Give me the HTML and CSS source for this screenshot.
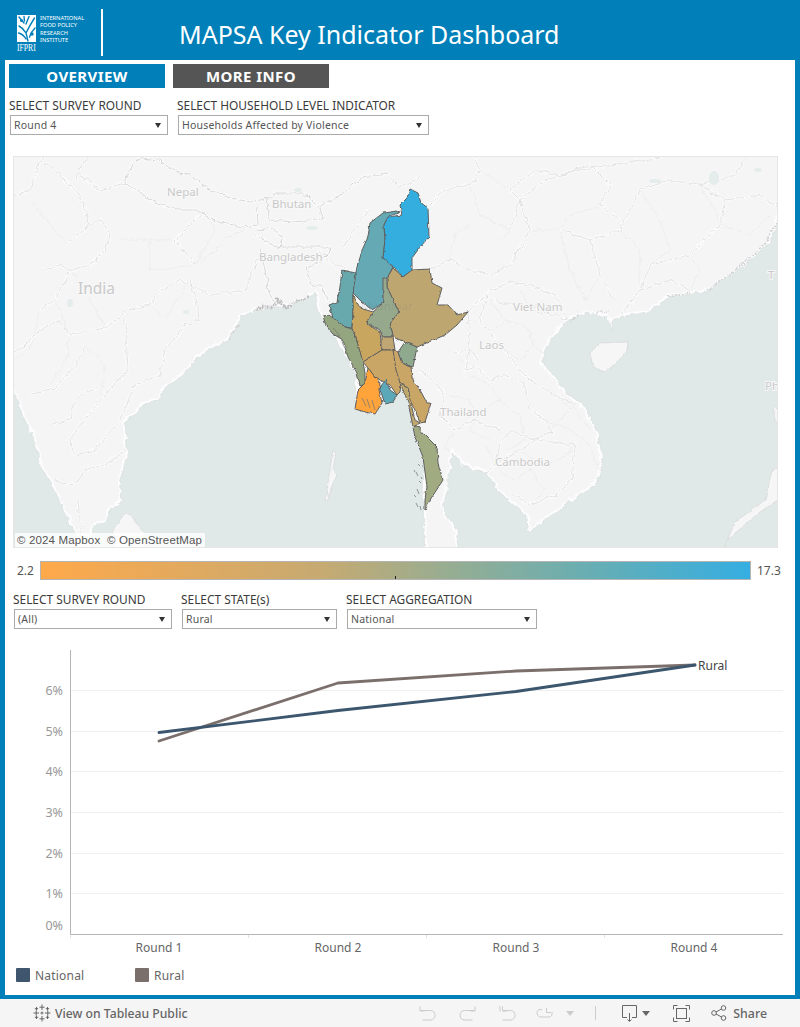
FILE: index.html
```html
<!DOCTYPE html>
<html lang="en">
<head>
<meta charset="utf-8">
<title>MAPSA Key Indicator Dashboard</title>
<link rel="stylesheet" href="styles.css">
</head>
<body>
<div class="frame">
  <header class="header">
    <div class="logo">
      <div class="logo-mark">
        <svg class="logo-svg" viewBox="0 0 20 37" width="20" height="37">
          <rect x="0" y="0" width="19" height="27" fill="#fff"/>
          <g fill="none" stroke="#007fb9" stroke-width="1.4" stroke-linecap="round">
            <path d="M2 2 L7 8 M7 1.5 L7.5 6 M12 1.5 L9 9 M17.5 3 Q13 10 9 18 M2 11 Q6 13 9 18 L11 26 M1.5 18 Q6 19 9 24 M18 13 Q14 17 12.5 22"/>
          </g>
          <circle cx="4.5" cy="5.5" r="1.5" fill="#007fb9"/>
          <circle cx="15" cy="19" r="1.7" fill="#007fb9"/>
          <text x="0" y="25.7" class="logo-ifpri" transform="scale(1 1.4)">IFPRI</text>
        </svg>
      </div>
      <div class="logo-text">INTERNATIONAL<br>FOOD POLICY<br>RESEARCH<br>INSTITUTE</div>
    </div>
    <div class="header-rule"></div>
    <h1 class="title">MAPSA Key Indicator Dashboard</h1>
  </header>

  <main class="sheet">
    <nav class="tabs">
      <div class="tab tab-active">OVERVIEW</div>
      <div class="tab tab-muted">MORE INFO</div>
    </nav>

    <section class="filters filters-top">
      <div class="filter filter-a">
        <div class="filter-label">SELECT SURVEY ROUND</div>
        <div class="select"><span>Round 4</span><i class="caret"></i></div>
      </div>
      <div class="filter filter-b">
        <div class="filter-label">SELECT HOUSEHOLD LEVEL INDICATOR</div>
        <div class="select"><span>Households Affected by Violence</span><i class="caret"></i></div>
      </div>
    </section>

    <div class="map-wrap">
      <svg class="map" viewBox="13 156 765 392" width="765" height="392">
        <defs>
          <filter id="rough" x="0" y="140" width="800" height="430" filterUnits="userSpaceOnUse" color-interpolation-filters="sRGB">
            <feTurbulence type="fractalNoise" baseFrequency="0.14" numOctaves="3" seed="7" result="n"/>
            <feDisplacementMap in="SourceGraphic" in2="n" scale="6" xChannelSelector="R" yChannelSelector="G" result="d"/>
            <feGaussianBlur in="d" stdDeviation="0.35"/>
          </filter>
          <filter id="rough-soft" x="0" y="140" width="800" height="430" filterUnits="userSpaceOnUse" color-interpolation-filters="sRGB">
            <feTurbulence type="fractalNoise" baseFrequency="0.2" numOctaves="2" seed="3" result="n"/>
            <feDisplacementMap in="SourceGraphic" in2="n" scale="3" xChannelSelector="R" yChannelSelector="G" result="d"/>
            <feGaussianBlur in="d" stdDeviation="0.3"/>
          </filter>
          <g id="seas">
            <path d="M0 375 L13 390 L23 417 L33 437 L40 463 L53 487 L65 513 L75 533 L78 560 L0 560Z"/>
            <path d="M90 560 L93 527 L107 520 L110 510 L122 503 L120 477 L128 457 L127 447 L125 422 L137 413 L143 405 L160 400 L163 390 L180 377 L193 363 L210 348 L227 342 L237 327 L240 317 L257 310 L277 307 L290 307 L307 297 L315 293 L320 317 L328 325 L340 345 L355 375 L356 409 L375 414 L382 403 L397 395 L402 383 L410 400 L414 430 L424 465 L423 500 L425 560Z"/>
            <path d="M790 200 L778 218 L770 243 L747 263 L723 280 L707 292 L670 297 L647 312 L620 317 L612 320 L612 333 L607 317 L587 313 L570 320 L558 330 L545 350 L543 363 L557 380 L567 393 L585 407 L598 433 L603 463 L597 483 L573 500 L557 512 L528 532 L527 517 L517 507 L497 490 L487 473 L463 465 L453 453 L447 490 L443 507 L448 517 L457 530 L458 560 L790 560Z"/>
          </g>
          <g id="minor">
            <path d="M470 375 L490 385 L500 400 L480 410 L470 430 L490 440 M445 395 L470 400 L478 420 M500 400 L520 415 L525 440 L505 450 M455 430 L445 445 L452 455 M485 445 L500 470 L515 480 L530 470 L545 490 L530 505 M520 450 L540 465 L560 460 L575 445 M545 420 L570 430 L590 445 L598 470 M555 395 L575 410 L590 430 M540 437 L560 420 L575 405 M490 300 L505 320 L525 325 L535 345 L520 360 M505 320 L490 335 L505 350 L520 360 M460 360 L478 367 M520 290 L530 310 L545 300 M535 345 L550 360"/>
            <path d="M690 255 L700 270 L690 290 M620 230 L640 250 L640 290 M560 230 L570 270 L585 300 L600 275 M650 265 L670 250 L660 220 L640 190 M720 225 L750 235 L770 215 M700 185 L715 210 L720 225 M530 230 L560 230 M480 170 L510 190 M600 205 L570 215 L560 230 M500 240 L510 230 M470 185 L480 215 L510 230 M450 260 L455 235 L470 225"/>
            <path d="M30 200 L55 230 L67 243 M150 240 L175 240 M120 240 L150 240 L150 270 L195 265 M40 310 L30 350 L15 360 M195 265 L210 255 L230 235 L245 230 M205 210 L215 230 L195 265 M70 335 L65 360 L50 385 M55 300 L70 335 M85 345 L105 365 L100 400 M150 305 L165 320 L190 280 M105 328 L90 300 L70 270"/>
          </g>
          <path id="major" d="M125 183 L132 163 L143 158 L158 160 L173 170 L190 175 L207 188 L230 198 L250 202 L268 198 L277 193 L303 193 L320 207 L322 218 L295 222 L270 220 L267 210 L268 198 M125 183 L150 200 L177 210 L197 210 L217 222 L243 227 L258 225 L257 207 M320 207 L343 193 L363 177 L387 173 L398 187 M257 230 L273 228 L283 240 L281 248 L257 238 L252 232 M277 247 L327 247 L332 250 L320 262 L307 267 L312 287 L320 283 L328 300 M260 250 L265 270 L268 290 L277 307"/>
          <path id="mid" d="M353 273 L330 262 L320 250 M343 247 L365 215 L373 205 M398 187 L415 180 L420 175 M430 205 L445 190 L470 185 L480 170 L470 150 M430 269 L450 260 L470 270 L490 275 L510 265 L530 230 L520 200 L545 180 L580 170 L610 165 L650 160 L680 150 M468 312 L490 290 L510 282 L530 285 L555 295 L562 310 L567 320 L555 315 L530 310 L490 300 M488 295 L480 320 L500 345 L520 370 L530 380 L555 395 L575 405 M468 312 L470 340 L465 370 L478 367 L490 380 L505 375 L525 385 L530 410 L545 420 L552 432 L540 437 L520 450 L495 465 L488 473 M495 465 L500 445 L510 430 L520 435 L537 440 L575 445 L572 480 L555 495 L530 505 L514 495 M455 352 L470 350 L478 360 M420 370 L432 380 L445 395 L440 415 L455 430 L475 420 L500 430 M620 317 L640 290 L650 265 L690 255 L720 225 L725 200 L700 185 L670 180 L640 190 L620 230 L590 240 L560 230 M700 185 L735 175 L750 150 M725 200 L760 195 L785 210 M640 290 L670 280 L690 290 M590 240 L600 275 L615 300 M510 230 L520 200 L510 190 L535 170 L560 175 L590 165 L610 185 L600 205 L620 220 M5 360 L25 345 L40 330 L60 320 L70 335 L105 328 L128 310 L150 305 L160 290 L180 280 L210 295 L245 290 L258 258 M67 243 L90 225 L100 220 L110 235 L105 250 L90 265 L70 270 L55 300 L40 310 M40 270 L60 265 L70 270 M195 265 L175 240 L190 225 L205 210 M90 225 L80 195 L60 175 L40 160 M190 280 L200 320 L185 325 L165 350 L160 375 L135 385 L120 420 M125 320 L128 370 L100 400 L80 425 L70 440 L75 455 L95 450 L120 420 M30 395 L55 388 L80 360 L85 345 M50 425 L70 420 L75 400 L100 385 M85 470 L105 465 L125 450 M85 470 L80 480 L70 485 L55 480 M78 500 L82 540 M80 175 L100 190 L125 183 M5 200 L30 190 L40 160 L55 150 M90 150 L75 180"/>
        </defs>
        <rect x="13" y="156" width="765" height="392" fill="#f5f5f5"/>
        <g filter="url(#rough)">
          <use href="#seas" class="coast-glow"/>
          <use href="#minor" class="line-minor"/>
          <use href="#mid" class="line-glow"/>
          <use href="#major" class="line-glow"/>
          <use href="#mid" class="line-mid"/>
          <use href="#major" class="line-major"/>
          <use href="#seas" class="sea-fill"/>
          <path class="coast-dark" d="M257 310 L262 306 L272 307 L278 300 L285 308 L295 303 L308 296"/>
          <path class="coast-light" d="M570 322 L580 314 M668 297 L690 293 M707 291 L740 266 L765 245 L776 222 M596 313 L610 311 M237 327 L227 342"/>
        </g>
        <g class="land-edge" filter="url(#rough-soft)">
          <path d="M590 353 L600 343 L628 342 L627 350 L617 363 L605 372 L593 367Z"/>
          <path d="M125 513 L131 515 L143 532 L146 555 L112 555 L114 528Z"/>
          <path d="M773 405 L777 408 L782 430 L775 420Z"/>
          <path d="M772 470 L782 465 L782 498 L760 512 L727 540 L725 555 L721 555 L735 522 L765 500Z"/>
          <path d="M333 450 L336 452 L333 470 L337 475 L331 488 L329 498 L327 490 L330 470Z"/>
          <path d="M326 495 L329 497 L328 501 L325 500Z"/>
        </g>
        <g class="lakes">
          <ellipse cx="714" cy="178" rx="5" ry="7"/>
          <ellipse cx="758" cy="170" rx="4" ry="2"/>
          <ellipse cx="655" cy="181" rx="6" ry="2"/>
          <ellipse cx="70" cy="303" rx="3" ry="4"/>
          <ellipse cx="186" cy="312" rx="3" ry="2"/>
          <ellipse cx="298" cy="190" rx="4" ry="2"/>
          <ellipse cx="312" cy="228" rx="6" ry="2"/>
        </g>
        <g class="map-labels">
          <text x="167" y="196" class="lb12">Nepal</text>
          <text x="272" y="208" class="lb12">Bhutan</text>
          <text x="259" y="261" class="lb12">Bangladesh</text>
          <text x="78" y="294" class="lb16">India</text>
          <text x="513" y="311" class="lb12">Viet Nam</text>
          <text x="479" y="349" class="lb12">Laos</text>
          <text x="440" y="416" class="lb12">Thailand</text>
          <text x="495" y="466" class="lb12">Cambodia</text>
          <text x="768" y="279" class="lb12">T</text>
          <text x="765" y="390" class="lb12">Ph</text>
        </g>
        <g class="regions" filter="url(#rough-soft)">
          <path fill="#64a9b3" d="M400 212 L388 217 L384 225 L385 240 L383 258 L393 267 L387 278 L383 290 L383 303 L372 310 L362 302 L353 293 L353 287 L357 267 L363 248 L368 237 L370 223 L383 213 L397 211Z"/>
          <path fill="#68a9ae" d="M342 270 L356 273 L353 293 L353 312 L352 328 L345 327 L333 318 L329 305 L337 302 L340 287Z"/>
          <path fill="#33aede" d="M410 189 L418 193 L421 203 L428 208 L429 237 L420 247 L412 258 L412 270 L403 277 L395 268 L388 262 L383 258 L385 240 L384 225 L388 217 L402 215 L400 205 L407 198Z"/>
          <path fill="#93a67f" d="M323 316 L329 315 L333 318 L345 327 L352 329 L356 338 L362 357 L365 373 L365 384 L360 386 L357 373 L348 357 L343 340 L333 334 L326 326Z"/>
          <path fill="#c9a660" d="M353 295 L360 308 L373 312 L366 323 L380 332 L382 350 L363 362 L356 338 L352 328 L353 312Z"/>
          <path fill="#bea671" d="M393 268 L403 277 L412 270 L430 269 L432 283 L442 288 L437 305 L448 305 L457 315 L468 312 L457 325 L445 335 L417 347 L393 337 L390 323 L399 312 L387 287 L387 278Z"/>
          <path fill="#97a98c" d="M383 278 L387 278 L387 287 L399 312 L390 323 L393 337 L382 337 L380 330 L366 323 L373 312 L383 303Z"/>
          <path fill="#bfa672" d="M382 337 L393 337 L395 350 L382 350Z"/>
          <path fill="#c9a566" d="M382 350 L395 350 L398 365 L402 375 L400 392 L397 395 L390 385 L380 380 L375 377 L368 368 L363 362Z"/>
          <path fill="#c9a566" d="M393 350 L398 352 L402 363 L411 367 L412 378 L420 390 L427 403 L431 403 L425 422 L420 423 L415 410 L410 400 L408 387 L400 383 L396 370Z"/>
          <path fill="#8fa98f" d="M405 342 L417 347 L413 367 L402 363 L398 352Z"/>
          <path fill="#ffa33b" d="M368 368 L375 377 L380 383 L379 390 L382 403 L375 414 L365 412 L355 409 L358 390 L365 383Z"/>
          <path fill="#5ba9b8" d="M386 380 L390 390 L397 395 L393 402 L385 404 L382 395 L379 388Z"/>
          <path fill="#bfa76e" d="M400 383 L408 387 L410 400 L415 420 L420 423 L413 427 L408 402Z"/>
          <path fill="#a0ab82" d="M417 426 L425 435 L437 447 L438 463 L443 480 L430 500 L425 510 L425 500 L427 487 L423 457 L415 437 L413 427Z"/>
        </g>
        <text x="361" y="310" class="lb-myanmar">Myanmar</text>
        <g class="isles">
          <path d="M418 464 L420 466 M416 472 L418 476 M419 481 L421 483 M417 489 L419 494 M421 477 L422 479 M414 495 L416 497 M416 503 L418 507 M420 506 L421 510 M414 470 L415 472"/>
          <path d="M362 398 L366 406 M367 399 L370 408 M372 400 L375 410"/>
          <path d="M333 328 L340 336 M342 342 L346 350 M337 335 L343 340"/>
        </g>
      </svg>
      <div class="attribution">© 2024 Mapbox&nbsp; © OpenStreetMap</div>
    </div>

    <section class="scale">
      <span class="scale-min">2.2</span>
      <div class="scale-bar"><i class="scale-tick"></i></div>
      <span class="scale-max">17.3</span>
    </section>

    <section class="filters filters-low">
      <div class="filter filter-c">
        <div class="filter-label">SELECT SURVEY ROUND</div>
        <div class="select"><span>(All)</span><i class="caret"></i></div>
      </div>
      <div class="filter filter-d">
        <div class="filter-label">SELECT STATE(s)</div>
        <div class="select"><span>Rural</span><i class="caret"></i></div>
      </div>
      <div class="filter filter-e">
        <div class="filter-label">SELECT AGGREGATION</div>
        <div class="select"><span>National</span><i class="caret"></i></div>
      </div>
    </section>

    <svg class="chart" viewBox="5 640 790 318" width="790" height="318">
      <g class="grid">
        <path d="M71 690.5H783M71 731.5H783M71 771.5H783M71 812.5H783M71 853.5H783M71 893.5H783"/>
      </g>
      <g class="axis">
        <path d="M70.5 650V934.5H783"/>
      </g>
      <g class="ticks">
        <path d="M70.5 935V938M248.5 935V938M426.5 935V938M604.5 935V938"/>
      </g>
      <g class="y-labels">
        <text x="63" y="695">6%</text>
        <text x="63" y="736">5%</text>
        <text x="63" y="776">4%</text>
        <text x="63" y="817">3%</text>
        <text x="63" y="858">2%</text>
        <text x="63" y="898">1%</text>
        <text x="63" y="930">0%</text>
      </g>
      <polyline class="line-rural" points="159,741 338,683 516,671 695,665"/>
      <polyline class="line-national" points="159,732.5 338,710.5 516,691.5 695,665"/>
      <text x="698" y="670" class="line-label">Rural</text>
      <g class="x-labels">
        <text x="159" y="952">Round 1</text>
        <text x="338" y="952">Round 2</text>
        <text x="516" y="952">Round 3</text>
        <text x="694" y="952">Round 4</text>
      </g>
    </svg>

    <section class="legend">
      <div class="legend-item legend-national"><i class="swatch swatch-national"></i><span>National</span></div>
      <div class="legend-item"><i class="swatch swatch-rural"></i><span>Rural</span></div>
    </section>
  </main>
</div>

<footer class="toolbar">
  <div class="tb-left">
    <svg class="tb-logo" viewBox="0 0 18 18" width="18" height="18">
      <path d="M9 0.5V6M6.5 3.2H11.5M9 12V17.5M6.5 14.8H11.5M0.5 9H6M3.2 6.5V11.5M12 9H17.5M14.8 6.5V11.5M3.5 3V6.5M1.8 4.7H5.2M14.5 3V6.5M12.8 4.7H16.2M3.5 11.5V15M1.8 13.3H5.2M14.5 11.5V15M12.8 13.3H16.2M9 7.5V10.5M7.5 9H10.5"/>
    </svg>
    <span>View on Tableau Public</span>
  </div>
  <div class="tb-right">
    <svg class="tb-icon off i1" viewBox="0 0 17 16" width="17" height="16"><path d="M1 1.5V6H5.5M1.5 5.5H11.5C14.2 5.5 16 7.5 16 10.2S14.2 15 11.5 15H3.5"/></svg>
    <svg class="tb-icon off i2" viewBox="0 0 17 16" width="17" height="16"><path d="M16 1.5V6H11.5M15.5 5.5H5.5C2.8 5.5 1 7.5 1 10.2S2.8 15 5.5 15H13.5"/></svg>
    <svg class="tb-icon off i3" viewBox="0 0 17 16" width="17" height="16"><path d="M1 1V6.5M3.5 1.5V6H8M4 5.5H11.5C14.2 5.5 16 7.5 16 10.2S14.2 15 11.5 15H3.5"/></svg>
    <svg class="tb-icon off i4" viewBox="0 0 17 16" width="17" height="16"><path d="M10.5 3V7.5H15M6 4.5H4C2.3 4.5 1 5.9 1 7.5S2.3 12 4 12H13C14.7 12 16 10.6 16 9V7"/></svg>
    <i class="tb-caret off-caret i5"></i>
    <i class="tb-sep"></i>
    <svg class="tb-icon on i6" viewBox="0 0 15 17" width="15" height="17"><path d="M5 12.5H0.5V0.5H14.5V12.5H10M7.5 8V16M5.5 14.5L7.5 16.5L9.5 14.5"/></svg>
    <i class="tb-caret on-caret i7"></i>
    <svg class="tb-icon on i8" viewBox="0 0 17 17" width="17" height="17"><path d="M0.5 4.5V0.5H4.5M12.5 0.5H16.5V4.5M16.5 12.5V16.5H12.5M4.5 16.5H0.5V12.5"/><rect x="3.5" y="3.5" width="10" height="10"/></svg>
    <svg class="tb-icon on i9" viewBox="0 0 16 16" width="16" height="16"><circle cx="3" cy="8" r="2.3"/><circle cx="12.5" cy="3" r="2.3"/><circle cx="12.5" cy="13" r="2.3"/><path d="M5 7L10.5 4M5 9L10.5 12"/></svg>
    <span class="tb-share">Share</span>
  </div>
</footer>
</body>
</html>
```
FILE: styles.css
```css
* { box-sizing: border-box; }
html, body { margin: 0; padding: 0; }
body {
  width: 800px;
  height: 1027px;
  overflow: hidden;
  background: #f5f5f5;
  font-family: "Noto Sans", "Open Sans", sans-serif;
}
.frame {
  background: #007fb9;
  padding: 0 5px 4px;
  height: 999px;
  display: flex;
  flex-direction: column;
}
.header {
  height: 60px;
  margin: 0 -5px;
  display: flex;
  align-items: flex-start;
  color: #fff;
}
.logo {
  display: flex;
  margin: 15px 0 0 17px;
  width: 84px;
  gap: 3px;
}
.logo-mark { width: 20px; height: 37px; }
.logo-svg { display: block; overflow: visible; }
.logo-ifpri { font: 400 7.7px "Liberation Serif", serif; fill: #fff; }
.logo-text {
  font: 5.7px/7.3px "Noto Sans", sans-serif;
  color: #fff;
  white-space: nowrap;
}
.header-rule {
  width: 2px;
  height: 47px;
  margin-top: 9px;
  background: #fff;
}
.title {
  margin: 16px 0 0 76px;
  font-weight: 400;
  font-size: 25px;
  line-height: 36px;
  color: #fff;
  white-space: nowrap;
}
.sheet {
  background: #fff;
  flex: 1;
  min-height: 0;
  overflow: hidden;
}
.tabs {
  display: flex;
  gap: 8px;
  padding: 4px 0 0 4px;
}
.tab {
  width: 156px;
  height: 24px;
  line-height: 24px;
  text-align: center;
  color: #fff;
  font-size: 15px;
  font-weight: 700;
  letter-spacing: 0.4px;
}
.tab-active { background: #007fb9; }
.tab-muted { background: #555; }
.filters { display: flex; }
.filters-top { margin: 10px 0 0 4px; }
.filters-low { margin: 12px 0 0 8px; }
.filter-label {
  height: 17px;
  line-height: 15px;
  font-size: 11.9px;
  color: #3a3a3a;
  white-space: nowrap;
}
.select {
  height: 20px;
  margin-left: 1px;
  border: 1px solid #aaa;
  display: flex;
  align-items: center;
  justify-content: space-between;
  padding: 0 6px 0 3px;
  font-size: 10.5px;
  color: #555;
  letter-spacing: 0.2px;
  background: #fff;
  white-space: nowrap;
}
.caret {
  width: 0;
  height: 0;
  border-left: 3.5px solid transparent;
  border-right: 3.5px solid transparent;
  border-top: 5px solid #333;
}
.filter-a { width: 159px; margin-right: 9px; }
.filter-b { width: 252px; }
.filter-c { width: 159px; margin-right: 9px; }
.filter-d { width: 156px; margin-right: 9px; }
.filter-e { width: 191px; }
.map-wrap {
  position: relative;
  margin: 21px 0 0 8px;
  width: 765px;
  height: 392px;
}
.map { display: block; outline: 1px solid #e6e6e6; outline-offset: -1px; }
.sea-fill { fill: #e1e8e8; stroke: #d9dddd; stroke-width: 0.7; }
.coast-glow { fill: none; stroke: #fff; stroke-width: 5; opacity: 0.8; }
.line-minor { fill: none; stroke: #e9e9e9; stroke-width: 0.7; }
.line-glow { fill: none; stroke: #fbfbfb; stroke-width: 3; }
.line-mid { fill: none; stroke: #dcdcdc; stroke-width: 0.8; }
.line-major { fill: none; stroke: #d2d2d2; stroke-width: 0.9; }
.coast-dark { fill: none; stroke: #bdbdbd; stroke-width: 2.6; stroke-dasharray: 2 1; }
.coast-light { fill: none; stroke: #cdcdcd; stroke-width: 1.4; stroke-dasharray: 2 1.5; }
.land-edge path { fill: #f6f6f6; stroke: #d6d6d6; stroke-width: 0.7; }
.lakes ellipse { fill: #e5ecec; }
.map-labels text {
  fill: #c9c9c9;
  font-family: "Noto Sans", sans-serif;
  stroke: #f8f8f8;
  stroke-width: 2px;
  paint-order: stroke;
}
.lb12 { font-size: 11.5px; }
.lb16 { font-size: 15.5px; }
.lb-myanmar {
  font-family: "Noto Sans", sans-serif;
  font-size: 11.5px;
  fill: rgba(110, 110, 110, 0.18);
}
.regions path {
  stroke: #5f5f5f;
  stroke-width: 1;
  stroke-linejoin: round;
}
.isles path { fill: none; stroke: #777; stroke-width: 1; opacity: 0.75; }
.attribution {
  position: absolute;
  left: 2px;
  bottom: 1px;
  width: 190px;
  height: 14px;
  padding-left: 2px;
  background: rgba(255, 255, 255, 0.8);
  font: 11.5px/14px "Liberation Sans", sans-serif;
  letter-spacing: 0.15px;
  color: #555;
  white-space: nowrap;
}
.scale {
  margin: 13px 0 0 0;
  height: 19px;
  display: flex;
  align-items: center;
  font-size: 12px;
  color: #555;
}
.scale-min { width: 35px; padding-left: 12px; }
.scale-max { margin-left: 6px; }
.scale-bar {
  position: relative;
  width: 711px;
  height: 19px;
  border: 1px solid #b5b5b5;
  background: linear-gradient(90deg, #ffa94a 0%, #c5aa72 40%, #98ad91 57%, #66aeb4 78%, #35aee2 100%);
}
.scale-tick {
  position: absolute;
  left: 354px;
  bottom: 0;
  width: 1px;
  height: 3px;
  background: #222;
}
.chart { display: block; margin-top: 11px; }
.grid path { stroke: #efefef; stroke-width: 1; fill: none; }
.axis path { stroke: #b5b5b5; stroke-width: 1; fill: none; }
.ticks path { stroke: #e2e2e2; stroke-width: 1; fill: none; }
.y-labels text {
  text-anchor: end;
  font-size: 12.5px;
  fill: #999;
}
.x-labels text {
  text-anchor: middle;
  font-size: 12px;
  fill: #666;
}
.line-rural, .line-national {
  fill: none;
  stroke-width: 2.8;
  stroke-linejoin: round;
  stroke-linecap: round;
}
.line-rural { stroke: #7b6f6c; }
.line-national { stroke: #3c566e; }
.line-label { font-size: 12px; fill: #444; }
.legend {
  display: flex;
  margin: 10px 0 0 11px;
  font-size: 12px;
  color: #666;
  letter-spacing: 0.2px;
}
.legend-item { display: flex; align-items: center; gap: 5px; height: 14px; }
.legend-national { width: 119px; }
.swatch { width: 14px; height: 14px; border-radius: 1px; }
.swatch-national { background: #3f566e; }
.swatch-rural { background: #7b6f6c; }
.toolbar {
  height: 28px;
  display: flex;
  align-items: center;
  justify-content: space-between;
  background: #f5f5f5;
  color: #666;
  font-size: 12.2px;
  font-weight: 500;
}
.tb-left {
  display: flex;
  align-items: center;
  gap: 4px;
  padding-left: 33px;
}
.tb-logo path { fill: none; stroke: #666; stroke-width: 1; }
.tb-right {
  display: flex;
  align-items: center;
  padding-right: 33px;
}
.tb-icon { display: block; fill: none; stroke-width: 1; }
.tb-icon.off { stroke: #ccc; }
.tb-icon.on { stroke: #666; }
.i2, .i3 { margin-left: 23px; }
.i4 { margin-left: 20px; }
.i5 { margin-left: 13px; }
.tb-sep { width: 1px; height: 14px; background: #ccc; margin: 0 26px 0 21px; }
.tb-caret {
  width: 0;
  height: 0;
  border-left: 4px solid transparent;
  border-right: 4px solid transparent;
}
.off-caret { border-top: 5px solid #ccc; }
.on-caret { border-top: 5px solid #666; margin-left: 5px; }
.i8 { margin-left: 23px; }
.i9 { margin-left: 21px; }
.tb-share { margin-left: 6px; font-size: 12.4px; }
```
